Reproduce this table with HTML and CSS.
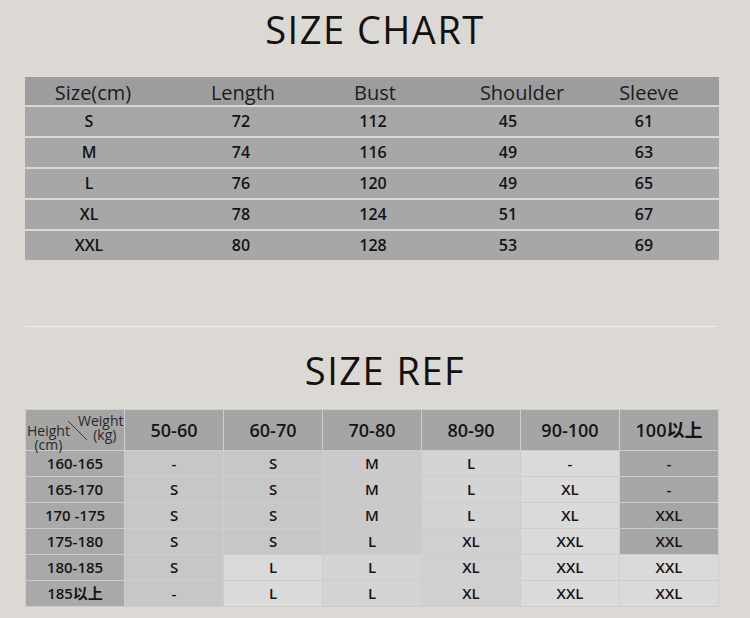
FILE: index.html
```html
<!DOCTYPE html>
<html>
<head>
<meta charset="utf-8">
<link rel="stylesheet" href="styles.css">
</head>
<body>
<div class="page">
  <section class="sec sec-chart">
    <h1 class="title">SIZE CHART</h1>
    <span class="ghost ghost-1">SIZE</span>
    <div class="chart">
      <div class="chart-head">
        <div>Size(cm)</div><div>Length</div><div>Bust</div><div>Shoulder</div><div>Sleeve</div>
      </div>
      <div class="chart-row"><div>S</div><div>72</div><div>112</div><div>45</div><div>61</div></div>
      <div class="chart-row"><div>M</div><div>74</div><div>116</div><div>49</div><div>63</div></div>
      <div class="chart-row"><div>L</div><div>76</div><div>120</div><div>49</div><div>65</div></div>
      <div class="chart-row"><div>XL</div><div>78</div><div>124</div><div>51</div><div>67</div></div>
      <div class="chart-row"><div>XXL</div><div>80</div><div>128</div><div>53</div><div>69</div></div>
    </div>
  </section>

  <hr class="divider">

  <section class="sec sec-ref">
    <h2 class="title title-ref">SIZE REF</h2>
    <span class="ghost ghost-2">SIZE REF</span>
    <div class="ref">
      <div class="hc corner">
        <span class="c-height">Height<br>(cm)</span>
        <span class="c-weight">Weight<br><span class="kg">(kg)</span></span>
        <svg class="c-diag" width="22" height="22" viewBox="0 0 22 22"><line x1="1" y1="1" x2="20" y2="20" stroke="#3a3a3a" stroke-width="1"/></svg>
      </div>
      <div class="hc">50-60</div><div class="hc">60-70</div><div class="hc">70-80</div><div class="hc">80-90</div><div class="hc">90-100</div><div class="hc">100以上</div>

      <div class="rl">160-165</div><div class="c mid">-</div><div class="c mid">S</div><div class="c mid2">M</div><div class="c lt">L</div><div class="c lt2">-</div><div class="c dk">-</div>
      <div class="rl">165-170</div><div class="c mid">S</div><div class="c mid">S</div><div class="c mid2">M</div><div class="c lt">L</div><div class="c lt2">XL</div><div class="c dk">-</div>
      <div class="rl">170 -175</div><div class="c mid">S</div><div class="c mid">S</div><div class="c mid2">M</div><div class="c lt">L</div><div class="c lt2">XL</div><div class="c dk">XXL</div>
      <div class="rl">175-180</div><div class="c mid">S</div><div class="c mid">S</div><div class="c mid2">L</div><div class="c lt3">XL</div><div class="c lt2">XXL</div><div class="c dk">XXL</div>
      <div class="rl">180-185</div><div class="c mid">S</div><div class="c lt2">L</div><div class="c lt">L</div><div class="c lt3">XL</div><div class="c lt2">XXL</div><div class="c lt2">XXL</div>
      <div class="rl">185以上</div><div class="c mid">-</div><div class="c lt2">L</div><div class="c lt">L</div><div class="c lt3">XL</div><div class="c lt2">XXL</div><div class="c lt2">XXL</div>
    </div>
  </section>
</div>
</body>
</html>
```
FILE: styles.css
```css
* { box-sizing: border-box; }
html, body { margin: 0; padding: 0; }
body {
  background: #dcd8d4;
  font-family: "Open Sans", "Noto Sans CJK SC", sans-serif;
  color: #141414;
  width: 750px;
  height: 618px;
  overflow: hidden;
}
.page { padding: 0 25px 0 25px; }
.sec { position: relative; }
.title {
  margin: 0;
  font-weight: 400;
  font-size: 38px;
  line-height: 37px;
  letter-spacing: 1.5px;
  text-align: center;
  color: #111;
}
.sec-chart { padding-top: 11px; }
.sec-chart .title { margin-bottom: 29px; }
.title-ref { padding-left: 20px; }
.ghost {
  position: absolute;
  left: 3px;
  font-size: 14px;
  font-weight: 700;
  color: rgba(255,255,255,0.1);
  line-height: 14px;
}
.ghost-1 { top: 51px; }
.ghost-2 { top: 35px; }

.chart { width: 694px; display: flex; flex-direction: column; gap: 2px; }
.chart-head {
  display: grid;
  grid-template-columns: 136px 164px 100px 194px 60px 1fr;
  height: 28px;
  background: #9d9d9d;
  font-size: 20px;
  line-height: 31px;
  color: #1c1c1c;
}
.chart-row {
  display: grid;
  grid-template-columns: 128px 176px 88px 182px 90px 1fr;
  height: 29px;
  background: #a7a7a7;
  font-size: 16px;
  line-height: 29px;
  font-weight: 600;
  color: #141414;
}
.chart-head div, .chart-row div { text-align: center; white-space: nowrap; }

.divider {
  border: 0;
  height: 1px;
  background: #efece9;
  margin: 66px 0 0 0;
  width: 692px;
}
.sec-ref { padding-top: 25px; }
.sec-ref .title { margin-bottom: 20px; }

.ref {
  width: 694px;
  display: grid;
  grid-template-columns: repeat(7, 1fr);
  grid-template-rows: 40px repeat(6, 25px);
  gap: 1px;
  border: 1px solid #cdcdcd;
  background: #cdcdcd;
}
.hc {
  background: #a5a5a5;
  font-size: 18px;
  font-weight: 600;
  line-height: 40px;
  text-align: center;
  color: #151515;
}
.corner { position: relative; overflow: visible; z-index: 2; }
.c-height, .c-weight {
  position: absolute;
  font-size: 14px;
  font-weight: 400;
  line-height: 14px;
  color: #2a2a2a;
  white-space: nowrap;
  text-align: center;
}
.c-height { left: 1px; top: 14px; }
.c-weight { left: 52px; top: 4px; }
.kg { padding-left: 8px; }
.c-diag { position: absolute; left: 41px; top: 10px; }
.rl {
  background: #a9a9a9;
  font-size: 15px;
  font-weight: 600;
  line-height: 25px;
  text-align: center;
  color: #151515;
}
.c {
  font-size: 15px;
  font-weight: 600;
  line-height: 25px;
  text-align: center;
  color: #151515;
}
.mid { background: #c7c7c7; }
.mid2 { background: #cacaca; }
.lt { background: #d4d4d4; }
.lt2 { background: #dadada; }
.lt3 { background: #d0d0d0; }
.dk { background: #a6a6a6; }
```
